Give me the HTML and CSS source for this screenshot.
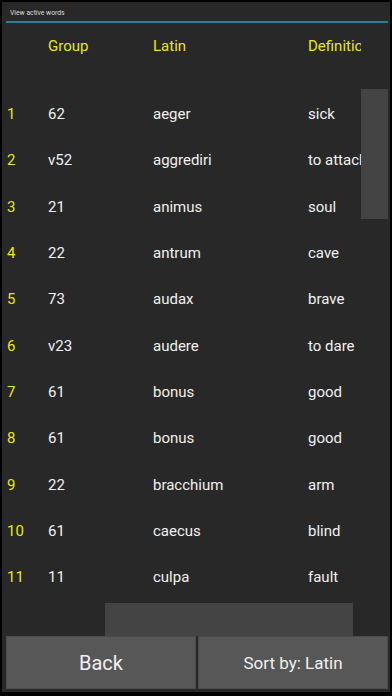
FILE: index.html
```html
<!DOCTYPE html>
<html>
<head>
<meta charset="utf-8">
<link rel="stylesheet" href="styles.css">
</head>
<body>
<div class="frame">
  <div class="title">View active words</div>
  <div class="rule"></div>
  <div class="tablewrap">
    <div class="table">
      <div class="row head"><span></span><span>Group</span><span>Latin</span><span>Definition</span></div>
      <div class="rows">
        <div class="row"><span class="num">1</span><span>62</span><span>aeger</span><span>sick</span></div>
        <div class="row"><span class="num">2</span><span>v52</span><span>aggrediri</span><span>to attack</span></div>
        <div class="row"><span class="num">3</span><span>21</span><span>animus</span><span>soul</span></div>
        <div class="row"><span class="num">4</span><span>22</span><span>antrum</span><span>cave</span></div>
        <div class="row"><span class="num">5</span><span>73</span><span>audax</span><span>brave</span></div>
        <div class="row"><span class="num">6</span><span>v23</span><span>audere</span><span>to dare</span></div>
        <div class="row"><span class="num">7</span><span>61</span><span>bonus</span><span>good</span></div>
        <div class="row"><span class="num">8</span><span>61</span><span>bonus</span><span>good</span></div>
        <div class="row"><span class="num">9</span><span>22</span><span>bracchium</span><span>arm</span></div>
        <div class="row"><span class="num">10</span><span>61</span><span>caecus</span><span>blind</span></div>
        <div class="row"><span class="num">11</span><span>11</span><span>culpa</span><span>fault</span></div>
      </div>
    </div>
    <div class="hthumb"></div>
  </div>
  <div class="vthumb"></div>
  <div class="buttons">
    <div class="btn back">Back</div>
    <div class="btn sort">Sort by: Latin</div>
  </div>
</div>
</body>
</html>
```

FILE: styles.css
```css
html, body {
  margin: 0;
  padding: 0;
  background: #000;
}
body {
  width: 392px;
  height: 696px;
  overflow: hidden;
  font-family: Roboto, "Noto Sans", sans-serif;
}
.frame {
  margin: 2px;
  width: 388px;
  height: 690px;
  background: #282828;
  display: flex;
  flex-direction: column;
  position: relative;
}
.title {
  padding: 7px 0 0 8px;
  font-size: 6.8px;
  line-height: 9px;
  color: #dcdcdc;
  box-sizing: border-box;
  height: 19px;
}
.rule {
  height: 2px;
  background: #2f7d93;
  margin: 0 2px 0 4px;
}
.tablewrap {
  flex: 1;
  position: relative;
}
.table {
  width: 354px;
  padding-left: 5px;
  padding-top: 1px;
  overflow: hidden;
  white-space: nowrap;
}
.row {
  display: grid;
  grid-template-columns: 41px 105px 155px 120px;
  height: 46.37px;
  line-height: 46.37px;
  font-size: 15px;
  color: #f0f0f0;
}
.row.head {
  height: 45px;
  line-height: 45px;
  color: #e8e810;
  margin-bottom: 21.8px;
}
.num {
  color: #e8e810;
}
.hthumb {
  position: absolute;
  left: 103px;
  bottom: 0;
  width: 248px;
  height: 33px;
  background: #444444;
}
.vthumb {
  position: absolute;
  left: 359px;
  top: 87px;
  width: 27px;
  height: 130px;
  background: #444444;
}
.buttons {
  display: flex;
  gap: 2px;
  height: 53px;
  padding: 0 2px 3px 4px;
}
.btn {
  flex: 1;
  background: #575757;
  border: 1px solid #4b4b4b;
  color: #f0f0f0;
  display: flex;
  align-items: center;
  justify-content: center;
}
.back {
  font-size: 20px;
}
.sort {
  font-size: 17px;
}
```
